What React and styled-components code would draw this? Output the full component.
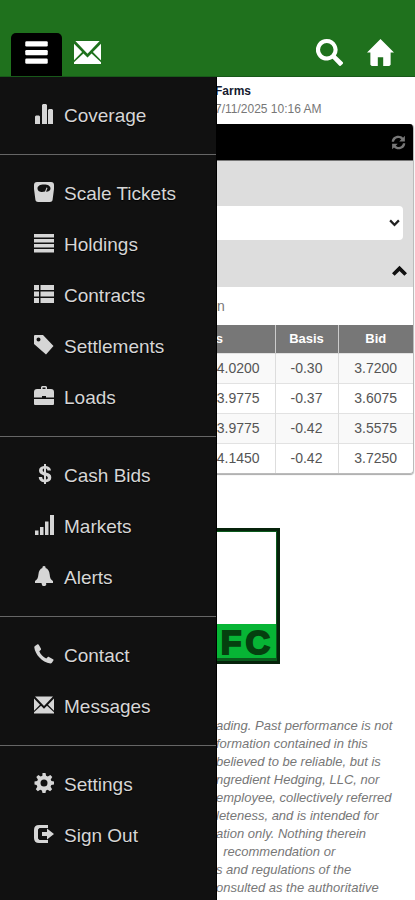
import React from "react";
import styled, { createGlobalStyle, css } from "styled-components";

const GlobalStyle = createGlobalStyle`
  *, *::before, *::after { box-sizing: border-box; }
  html, body { margin: 0; padding: 0; background: #fff; }
  body { font-family: "Liberation Sans", Arial, sans-serif; font-size: 14px; color: #333; }
  button { font: inherit; color: inherit; background: none; border: 0; padding: 0; cursor: pointer; }
`;

const drawerWidth = "217px";
const contentStart = "216px";

const Page = styled.div`
  display: flex;
  flex-direction: column;
  height: 100vh;
  overflow: hidden;
`;

const TopBar = styled.header`
  display: flex;
  align-items: flex-end;
  justify-content: space-between;
  flex: none;
  padding: 33px 21px 0 11px;
  background: #1f711d;
  border-bottom: 1px solid #18591a;
`;

const BarGroup = styled.div`
  display: flex;
  gap: ${(p) => p.$gap};
`;

const BarButton = styled.button`
  display: flex;
  align-items: center;
  justify-content: center;
  height: 43px;
  padding: 0 ${(p) => (p.$active ? "13px" : "0")} 4px;
  color: #fff;
  border-radius: 5px 5px 0 0;
  ${(p) => p.$active && css`background: #000;`}
`;

const Glyph = styled.svg`
  display: block;
  flex: none;
  width: ${(p) => p.$size || "20px"};
  height: ${(p) => p.$size || "20px"};
  fill: currentColor;
`;

const Stage = styled.div`
  position: relative;
  flex: 1;
  min-height: 0;
`;

const Drawer = styled.nav`
  position: absolute;
  top: 0;
  bottom: 0;
  left: 0;
  width: ${drawerWidth};
  background: #111;
  border-right: 1px solid #000;
`;

const MenuGroup = styled.ul`
  list-style: none;
  margin: 0;
  padding: 13px 0;
  & + & { border-top: 1px solid #666; }
`;

const MenuLink = styled.a`
  display: flex;
  align-items: center;
  gap: 10px;
  height: 51px;
  padding-left: 34px;
  font-size: 19px;
  color: #d6d6d6;
  text-decoration: none;
  text-shadow: 0 1px 1px #000;
  & > svg { margin-bottom: 4px; }
`;

const Account = styled.div`
  padding: 5px 0 6px 215px;
  font-size: 12px;
  line-height: 18px;
  color: #777;
  strong { display: block; color: #151a30; }
`;

const Panel = styled.section`
  margin-right: 1px;
  border: 1px solid #bbb;
  border-top: 0;
  border-radius: 4px;
  box-shadow: 0 1px 1px #aaa;
  overflow: hidden;
`;

const PanelHead = styled.div`
  display: flex;
  align-items: center;
  justify-content: flex-end;
  height: 37px;
  padding-right: 7px;
  background: #000;
  color: #777;
  border-bottom: 1px solid #777;
`;

const Filters = styled.div`
  padding: 45px 10px 0 10px;
  background: #ddd;
`;

const SelectBox = styled.div`
  display: grid;
  align-items: center;
  & > * { grid-area: 1 / 1; }
  & > svg { justify-self: end; margin-right: 2px; color: #222; pointer-events: none; }
`;

const Select = styled.select`
  width: 100%;
  height: 34px;
  border: 0;
  border-radius: 4px;
  background: #fff;
  appearance: none;
`;

const CollapseRow = styled.div`
  display: flex;
  justify-content: flex-end;
  align-items: center;
  height: 47px;
  padding-top: 14px;
  margin-right: -4px;
  color: #111;
`;

const Commodity = styled.div`
  height: 38px;
  padding-left: ${contentStart};
  line-height: 38px;
  color: #777;
`;

const Bids = styled.table`
  width: 100%;
  border-collapse: collapse;
  table-layout: fixed;
`;

const HeadCell = styled.th`
  height: 28px;
  padding: 0;
  font-size: 13px;
  color: #fff;
  background: #777;
  border-left: 1px solid #ccc;
  width: ${(p) => p.$width || "auto"};
  text-align: ${(p) => p.$align || "center"};
`;

const Cell = styled.td`
  height: 30px;
  padding: 0;
  padding-left: ${(p) => (p.$first ? "200px" : "0")};
  text-align: center;
  color: #555;
  border-left: 1px solid #ddd;
  border-top: 1px solid #e2e2e2;
  tr:nth-child(odd) > & { background: #f9f9f9; }
`;

const FuturesLabel = styled.span`
  display: block;
  width: 221px;
  text-align: right;
`;

const Logo = styled.div`
  display: flex;
  flex-direction: column;
  justify-content: flex-end;
  width: 145px;
  height: 136px;
  margin: 54px auto 0;
  border: 3px solid #06230b;
  outline: 1px solid #0a5a1c;
  outline-offset: -4px;
`;

const LogoBand = styled.div`
  display: flex;
  justify-content: flex-end;
  gap: 4px;
  height: 37px;
  padding-right: 7px;
  line-height: 36px;
  font-size: 34px;
  font-weight: 700;
  color: #05400f;
  background: #07b535;
  -webkit-text-stroke: 2px #05400f;
  border-bottom: 3px solid #0a5a1c;
`;

const Disclaimer = styled.p`
  margin: 53px 0 0;
  padding-left: ${contentStart};
  font-size: 13px;
  line-height: 18px;
  font-style: italic;
  color: #777;
  white-space: pre;
`;

const icons = {
  bars: <path d="M1 12.500l1-1h3l1 1V20H1zM8 1l1-1h3l1 1v19H8zM14 6l1-1h3l1 1v14h-5z" />,
  scale: <path fillRule="evenodd" d="M3 0h14a3 3 0 0 1 3 3v4l-1.300 10a3 3 0 0 1-3 3H4.300a3 3 0 0 1-3-3L0 7V3a3 3 0 0 1 3-3zM10 2.500C6 2.500 3.500 4 3.500 6.500S6 10 8 10l3-.5 1.500-4 1 .4L12 9.800c3-.1 4.500-1.600 4.500-3.300 0-2.500-2.500-4-6.500-4z" />,
  lines: <path d="M0 1h20v3.500H0zM0 6h20v3.500H0zM0 11h20v3.500H0zM0 16h20v3.500H0z" />,
  list: <path d="M0 1h5v5H0zM6.500 1H20v5H6.500zM0 7.500h5v5H0zM6.500 7.500H20v5H6.500zM0 14h5v5H0zM6.500 14H20v5H6.500z" />,
  tag: <path fillRule="evenodd" d="M1 0h8l10.500 11L12 19.500 0 9V1a1 1 0 0 1 1-1zM4.500 2.500a2 2 0 1 0 0 4 2 2 0 0 0 0-4z" />,
  briefcase: <path fillRule="evenodd" d="M7 3V1l1-1h4l1 1v2h4a3 3 0 0 1 3 3v5.500h-8V10H8v1.500H0V6a3 3 0 0 1 3-3zM8.500 3h3V1.500h-3zM0 13h20v5a1 1 0 0 1-1 1H1a1 1 0 0 1-1-1z" />,
  dollar: <path fillRule="evenodd" d="M10 0h2v2c3 .4 4.700 2 5 4.600h-3.500c-.2-1.100-.6-1.700-1.500-2v3.800c3.500.8 5.300 2 5.300 5 0 2.800-2 4.500-5.300 4.800V20h-2v-1.800c-3.500-.4-5.200-2.200-5.300-5.200h3.500c.1 1.500.6 2.200 1.800 2.600v-4.200C6.700 10.600 5 9.300 5 6.600 5 4 6.800 2.400 10 2zm0 4.500c-1.800.4-1.900 2.700 0 3.400zm2 7.300v3.800c2.400-.4 2.500-3 0-3.800z" />,
  signal: <path d="M1 15.500h3.500V20H1zM6 12h3.500v8H6zM11 6.500h3.500V20H11zM16 0h4v20h-4z" />,
  bell: <path d="M10 0a1.500 1.500 0 0 1 1.500 2c2.500.8 3.800 3 4.200 6.500.3 3.500.8 5 3.300 6.500v2h-7a2 2 0 0 1-4 2L7.500 17H1v-2c2.500-1.500 3-3 3.400-6.500C4.800 5 6 2.800 8.500 2A1.500 1.500 0 0 1 10 0z" />,
  phone: <path d="M1 2 3.500.3c.5-.3 1 0 1.300.4L7 4.800c.2.500 0 1-.3 1.300L5.300 7.200c1 2.800 4 6 7 7.200l1.500-1.300c.4-.3.800-.3 1.200-.1l4 2.300c.6.3.7.8.4 1.300l-1.500 2.200c-.3.500-.8.700-1.500.7C8 18.500 1 10 .3 3.500.3 2.800.5 2.300 1 2z" />,
  mail: <path d="M1 1.500h18L10 11zM0 3.500l6 6.200-6 6zM20 3.500v12.200l-6-6zM7 10.700l3 3 3-3 7 6.500v1.300H0v-1.300z" />,
  out: <path d="M14 1v3H5.500L4 5.500v9L5.500 16H14v3H5q-5 0-5-5V6q0-5 5-5zM13 4.500l7 5.500-7 5.500V12H8V8h5z" />,
  gear: <path fillRule="evenodd" d="M8.500 0h3l.6 2.800 1.700.7L16.300 2l2 2-1.600 2.400.7 1.700 2.600.5v2.900l-2.700.6-.7 1.700 1.500 2.400-2 2-2.400-1.500-1.700.7-.5 2.600h-3l-.6-2.600-1.700-.7-2.400 1.500-2-2 1.500-2.400-.7-1.700L.5 11.500V8.600l2.700-.5.7-1.700L2.300 4l2-2 2.400 1.500 1.700-.7zM10 6.500a3.500 3.500 0 1 0 0 7 3.500 3.500 0 0 0 0-7z" />,
  menu: <><rect x="1" y="1" width="18" height="4.200" rx="1" /><rect x="1" y="7.900" width="18" height="4.200" rx="1" /><rect x="1" y="14.800" width="18" height="4.200" rx="1" /></>,
  search: <path fillRule="evenodd" d="M8 0a8 8 0 0 1 6.700 12.300l5 4.800c.5.500.5.900 0 1.400l-1.200 1.200c-.5.500-.9.400-1.400 0l-4.800-5A8 8 0 1 1 8 0zm0 3a5 5 0 1 0 0 10A5 5 0 0 0 8 3z" />,
  home: <path d="M10 0l10 10h-2.500v9l-1 1H12v-6.500H8V20H3.500l-1-1v-9H0z" />,
  refresh: <path d="M1 9C1 4 5 1 10 1c2.500 0 4.500 1 6 2.500L18.500 1v7.500H11l2.700-2.700C10.500 2.500 5 4 4 9zM19 11c0 5-4 8-9 8-2.500 0-4.500-1-6-2.500L1.500 19v-7.500H9l-2.700 2.700c3.200 3.300 8.700 1.800 9.700-3.200z" />,
  up: <path d="M10 3.500l10 10-3.500 3.500-6.500-6.500L3.500 17 0 13.500z" />,
  down: <path d="M2 6.500 4.500 4l5.500 5.500L15.500 4 18 6.500l-8 8z" />,
};

const Icon = ({ name, size }) => (
  <Glyph viewBox="0 0 20 20" $size={size} aria-hidden="true">{icons[name]}</Glyph>
);

const menu = [
  [["bars", "Coverage"]],
  [["scale", "Scale Tickets"], ["lines", "Holdings"], ["list", "Contracts"], ["tag", "Settlements"], ["briefcase", "Loads"]],
  [["dollar", "Cash Bids"], ["signal", "Markets"], ["bell", "Alerts"]],
  [["phone", "Contact"], ["mail", "Messages"]],
  [["gear", "Settings"], ["out", "Sign Out"]],
];

const bids = [
  ["4.0200", "-0.30", "3.7200"],
  ["3.9775", "-0.37", "3.6075"],
  ["3.9775", "-0.42", "3.5575"],
  ["4.1450", "-0.42", "3.7250"],
];

const disclaimer = [
  "ading. Past performance is not",
  "formation contained in this",
  "believed to be reliable, but is",
  "ngredient Hedging, LLC, nor",
  "employee, collectively referred",
  "leteness, and is intended for",
  "ation only. Nothing therein",
  "  recommendation or",
  "s and regulations of the",
  "onsulted as the authoritative",
].join("\n");

export default function App() {
  return (
    <Page>
      <GlobalStyle />
      <TopBar>
        <BarGroup $gap="12px">
          <BarButton $active aria-label="Menu" aria-expanded="true"><Icon name="menu" size="25px" /></BarButton>
          <BarButton aria-label="Messages"><Icon name="mail" size="27px" /></BarButton>
        </BarGroup>
        <BarGroup $gap="24px">
          <BarButton aria-label="Search"><Icon name="search" size="27px" /></BarButton>
          <BarButton aria-label="Home"><Icon name="home" size="27px" /></BarButton>
        </BarGroup>
      </TopBar>
      <Stage>
        <main>
          <Account><strong>Farms</strong>7/11/2025 10:16 AM</Account>
          <Panel>
            <PanelHead>
              <button aria-label="Refresh"><Icon name="refresh" size="15px" /></button>
            </PanelHead>
            <Filters>
              <SelectBox>
                <Select aria-label="Location"><option /></Select>
                <Icon name="down" size="13px" />
              </SelectBox>
              <CollapseRow>
                <button aria-label="Collapse"><Icon name="up" size="15px" /></button>
              </CollapseRow>
            </Filters>
            <Commodity>n</Commodity>
            <Bids>
              <thead>
                <tr>
                  <HeadCell $align="left"><FuturesLabel>Futures</FuturesLabel></HeadCell>
                  <HeadCell $width="63px">Basis</HeadCell>
                  <HeadCell $width="75px">Bid</HeadCell>
                </tr>
              </thead>
              <tbody>
                {bids.map(([futures, basis, bid], i) => (
                  <tr key={i}>
                    <Cell $first>{futures}</Cell>
                    <Cell>{basis}</Cell>
                    <Cell>{bid}</Cell>
                  </tr>
                ))}
              </tbody>
            </Bids>
          </Panel>
          <Logo><LogoBand><span>F</span><span>C</span></LogoBand></Logo>
          <Disclaimer>{disclaimer}</Disclaimer>
        </main>
        <Drawer aria-label="Main menu">
          {menu.map((group, i) => (
            <MenuGroup key={i}>
              {group.map(([icon, label]) => (
                <li key={label}><MenuLink href="#"><Icon name={icon} />{label}</MenuLink></li>
              ))}
            </MenuGroup>
          ))}
        </Drawer>
      </Stage>
    </Page>
  );
}
